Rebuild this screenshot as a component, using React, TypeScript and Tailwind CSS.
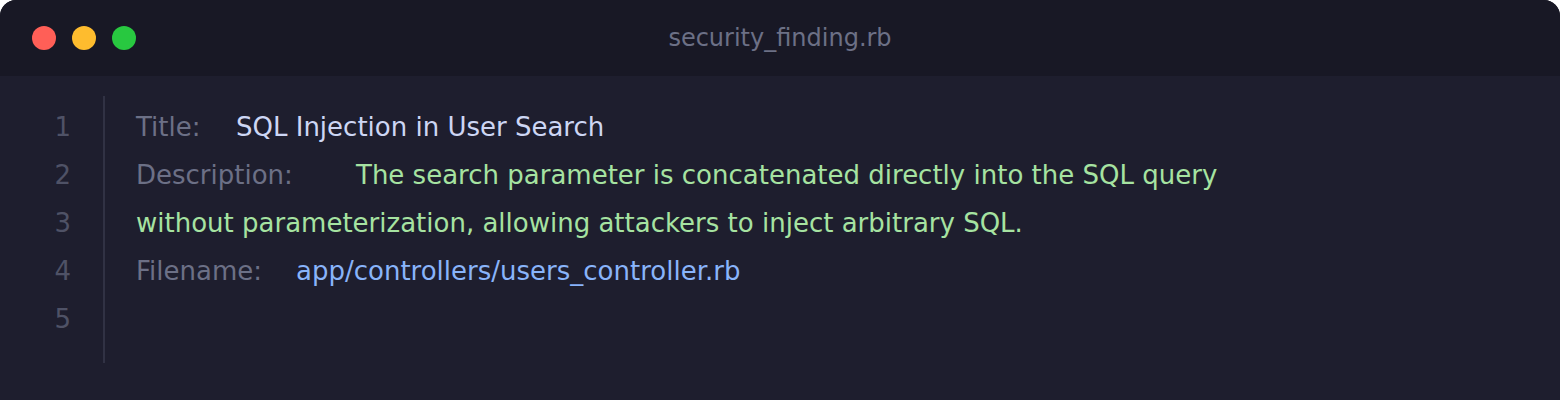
export default function App() {
    const lines = [1, 2, 3, 4, 5]

    return (
        <div className="w-[1560px] h-[400px] bg-white" style={{ fontFamily: '"DejaVu Sans", sans-serif' }}>
            <div className="h-full flex flex-col rounded-t-2xl overflow-hidden bg-[#1e1e2e]">
                {/* Title bar */}
                <div className="relative h-[76px] shrink-0 bg-[#181825] flex items-center px-8">
                    <div className="flex items-center gap-4">
                        <span className="w-6 h-6 rounded-full bg-[#ff5f57]"></span>
                        <span className="w-6 h-6 rounded-full bg-[#febc2e]"></span>
                        <span className="w-6 h-6 rounded-full bg-[#28c840]"></span>
                    </div>
                    <div className="absolute inset-0 flex items-center justify-center text-[24px] text-[#6c7086]">
                        security_finding.rb
                    </div>
                </div>

                {/* Code area */}
                <div className="flex-1 pt-5 pb-[37px] flex text-[26px] leading-[48px]">
                    <div className="w-[105px] border-r-2 border-[#313244] pr-8 pt-[7px] text-right text-[#4f5266]">
                        {lines.map((n) => (
                            <div key={n}>{n}</div>
                        ))}
                    </div>
                    <div className="flex-1 pl-[31px] pt-[7px] whitespace-nowrap">
                        <div>
                            <span className="inline-block w-[100px] text-[#6c7086]">Title:</span>
                            <span className="text-[#cdd6f4]">SQL Injection in User Search</span>
                        </div>
                        <div>
                            <span className="inline-block w-[220px] text-[#6c7086]">Description:</span>
                            <span className="text-[#a6e3a1]">The search parameter is concatenated directly into the SQL query</span>
                        </div>
                        <div className="text-[#a6e3a1]">without parameterization, allowing attackers to inject arbitrary SQL.</div>
                        <div>
                            <span className="inline-block w-[160px] text-[#6c7086]">Filename:</span>
                            <span className="text-[#89b4fa]">app/controllers/users_controller.rb</span>
                        </div>
                        <div>&nbsp;</div>
                    </div>
                </div>
            </div>
        </div>
    )
}
